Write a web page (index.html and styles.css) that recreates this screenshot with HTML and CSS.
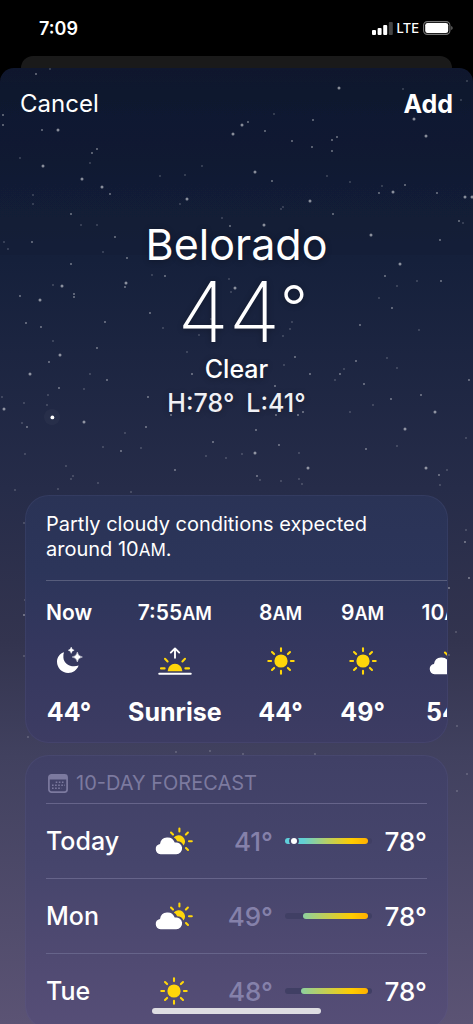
FILE: index.html
```html
<!DOCTYPE html>
<html lang="en">
<head>
<meta charset="utf-8">
<meta name="viewport" content="width=device-width, initial-scale=1">
<title>Belorado weather</title>
<link rel="stylesheet" href="styles.css">
</head>
<body>
<svg class="defs" aria-hidden="true">
  <symbol id="sun" viewBox="0 0 28 28">
    <circle cx="14" cy="14" r="6.6" fill="#ffd60a"/>
    <path d="M14 1.3v2.8M14 23.9v2.8M1.3 14h2.8M23.9 14h2.8M5 5l2.1 2.1M20.9 20.9l2.1 2.1M5 23l2.1-2.1M20.9 7.1l2.1-2.1" stroke="#ffd60a" stroke-width="2.1" stroke-linecap="round"/>
  </symbol>
  <symbol id="partly" viewBox="0 0 38 28">
    <path d="M24.4 1.6v2.8M34 14.2h2.8M16 5.6l2 2M30.9 7.6l2-2M31 21l2 2" stroke="#ffd60a" stroke-width="2.1" stroke-linecap="round"/>
    <path d="M18.8 10.5A6.3 6.3 0 1 1 28.6 18.6A7 7 0 0 0 22.2 14.3A8 8 0 0 0 18.8 10.5z" fill="#ffd60a"/>
    <path d="M5.6 27.2A5.2 5.2 0 0 1 5 16.9A7.6 7.6 0 0 1 19.7 15.6A5.9 5.9 0 1 1 21.2 27.2z" fill="#fff"/>
  </symbol>
  <symbol id="moon" viewBox="0 0 28 28">
    <path d="M9 5.2C5 6.400 2 10 2 14.800C2 21 7 26 13.200 26C18 26 22 23.200 23.600 18.600C16.500 21 9 17.500 8.400 10.800C8.200 8.700 8.400 6.800 9 5.200z" fill="#fff"/>
    <path d="M22.300 5q.7 4.300 5.200 5q-4.500.7-5.200 5q-.7-4.300-5.200-5q4.500-.7 5.200-5zM16.200 0q.4 2.700 3 3.200q-2.600.5-3 3.200q-.4-2.700-3-3.200q2.600-.5 3-3.200z" fill="#fff" stroke="#fff" stroke-width=".4"/>
  </symbol>
  <symbol id="sunrise" viewBox="0 0 34 28">
    <path d="M9.600 24.200A7.200 7.200 0 1 1 24.400 24.200z" fill="#ffd60a"/>
    <path d="M3 21.400h3.600M27.400 21.400H31M7 11.800l2.600 2.600M27 11.800l-2.600 2.600" stroke="#ffd60a" stroke-width="2.1" stroke-linecap="round"/>
    <path d="M1.200 26.800h31.600M17 10.800V1.600M12.800 5.600L17 1.400l4.200 4.200" fill="none" stroke="#fff" stroke-width="1.9" stroke-linecap="round" stroke-linejoin="round"/>
  </symbol>
</svg>

<header class="status">
  <time>7:09</time>
  <div class="signals">
    <svg width="21" height="13" viewBox="0 0 21 13" aria-label="Signal"><rect y="8" width="4" height="5" rx="1" fill="#fff"/><rect x="5.600" y="6" width="4" height="7" rx="1" fill="#fff"/><rect x="11.200" y="3" width="4" height="10" rx="1" fill="#fff"/><rect x="16.800" width="4" height="13" rx="1" fill="#444"/></svg>
    <span>LTE</span>
    <svg width="30" height="14" viewBox="0 0 30 14" aria-label="Battery"><rect x=".6" y=".6" width="26.300" height="12.800" rx="3.800" fill="none" stroke="#777" stroke-width="1.100"/><rect x="2.200" y="2" width="23" height="10" rx="2.300" fill="#fff"/><path d="M28.300 5v4q1.300-.5 1.300-2t-1.300-2z" fill="#777"/></svg>
  </div>
</header>
<div class="behind"></div>

<main class="sheet">
  <svg class="stars" width="473" height="956" viewBox="0 68 473 956" aria-hidden="true">
    <path class="faint" d="M50 69h0M403 89h0M467 81h0M461 100h0M20 158h0M274 114h0M202 166h0M160 176h0M185 175h0M180 204h0M222 218h0M281 209h0M283 207h0M327 176h0M350 182h0M382 186h0M463 223h0M33 195h0M33 204h0M4 242h0M8 249h0M103 252h0M53 285h0M53 341h0M90 374h0M84 389h0M47 405h0M22 423h0M2 397h0M24 403h0M48 395h0M25 454h0M103 447h0M125 433h0M66 466h0M73 476h0M71 479h0M98 483h0M131 492h0M15 490h0M58 489h0M141 448h0M206 456h0M226 458h0M242 454h0M260 480h0M281 481h0M299 479h0M302 484h0M299 453h0M335 380h0M344 369h0M350 412h0M373 405h0M419 330h0M379 298h0M397 286h0M417 281h0M387 358h0M397 368h0M397 446h0M466 438h0M447 470h0M440 485h0M152 275h0M229 279h0M231 292h0M292 322h0M290 329h0M283 336h0M187 352h0M211 319h0M284 365h0M199 335h0M163 328h0M466 530h0M24 523h0M25 600h0M24 656h0M456 632h0M449 655h0M457 726h0M467 774h0M457 791h0M28 737h0M176 752h0M210 751h0M333 776h0M243 754h0M315 754h0M81 225h0M97 225h0M90 163h0"/>
    <path class="mid" d="M36 74h0M3 115h0M3 125h0M42 130h0M97 149h0M92 153h0M71 214h0M115 237h0M127 258h0M71 264h0M32 242h0M26 323h0M41 327h0M105 322h0M97 348h0M49 362h0M107 380h0M59 388h0M27 427h0M121 451h0M148 397h0M146 427h0M74 294h0M74 297h0M20 296h0M110 194h0M125 287h0M248 122h0M313 120h0M265 131h0M292 141h0M312 147h0M272 181h0M333 214h0M332 151h0M337 137h0M332 140h0M379 193h0M405 185h0M437 193h0M459 221h0M440 240h0M385 276h0M441 281h0M392 308h0M360 325h0M356 361h0M340 374h0M364 384h0M391 399h0M421 395h0M469 380h0M366 449h0M439 475h0M165 276h0M150 313h0M192 374h0M295 357h0M310 374h0M275 386h0M276 415h0M303 412h0M298 415h0M256 430h0M279 445h0M257 476h0M175 470h0M213 442h0M171 415h0M465 542h0M469 578h0M449 588h0M24 615h0M230 226h0"/>
    <path class="bright" d="M339 88h0M414 119h0M242 125h0M233 134h0M43 166h0M82 179h0M102 187h0M393 192h0M255 172h0M187 199h0M371 235h0M426 136h0M465 197h0M472 197h0M400 264h0M62 286h0M126 283h0M40 300h0M60 355h0M30 374h0M4 409h0M264 225h0M310 201h0M435 412h0M405 429h0M426 468h0M255 453h0M308 468h0M235 288h0M84 422h0M58 130h0"/>
    <circle cx="52" cy="417" r="8" fill="#fff" opacity=".03"/>
    <circle cx="52.400" cy="417.400" r="1.900" fill="#fff"/>
  </svg>

  <nav class="actions">
    <button class="action" type="button">Cancel</button>
    <button class="action add" type="button">Add</button>
  </nav>

  <section class="current">
    <h1>Belorado</h1>
    <p class="now">44<span class="degree">°</span></p>
    <p class="condition">Clear</p>
    <p class="range"><span>H:78°</span><span>L:41°</span></p>
  </section>

  <section class="card">
    <p class="summary">Partly cloudy conditions expected around 10<small>AM</small>.</p>
    <ul class="hours">
      <li><span class="hour">Now</span><svg class="icon"><use href="#moon"/></svg><b>44°</b></li>
      <li><span class="hour">7:55<small>AM</small></span><svg class="icon wide"><use href="#sunrise"/></svg><b>Sunrise</b></li>
      <li><span class="hour">8<small>AM</small></span><svg class="icon"><use href="#sun"/></svg><b>44°</b></li>
      <li><span class="hour">9<small>AM</small></span><svg class="icon"><use href="#sun"/></svg><b>49°</b></li>
      <li><span class="hour">10<small>AM</small></span><svg class="icon cloud"><use href="#partly"/></svg><b>54°</b></li>
    </ul>
  </section>

  <section class="card forecast">
    <h2>
      <svg width="20" height="19" viewBox="0 0 20 19" aria-hidden="true"><rect x=".9" y=".9" width="18.200" height="17.200" rx="2.600" fill="none" stroke="currentColor" stroke-width="1.700"/><path d="M1 1h18v4.600H1z" fill="currentColor"/><path d="M7.700 8.300h9M4 11.300h13M4 14.300h9.500" stroke="currentColor" stroke-width="1.600" stroke-dasharray="1.600 1.500"/></svg>
      10-DAY FORECAST
    </h2>
    <ul class="days">
      <li><span>Today</span><svg class="icon cloud"><use href="#partly"/></svg><span class="low">41°</span><span class="track"><span class="fill cool" style="left:0%"></span><span class="dot" style="left:10%"></span></span><span class="high">78°</span></li>
      <li><span>Mon</span><svg class="icon cloud"><use href="#partly"/></svg><span class="low">49°</span><span class="track"><span class="fill" style="left:21%"></span></span><span class="high">78°</span></li>
      <li><span>Tue</span><svg class="icon"><use href="#sun"/></svg><span class="low">48°</span><span class="track"><span class="fill" style="left:18%"></span></span><span class="high">78°</span></li>
    </ul>
  </section>
</main>
<div class="home"></div>
</body>
</html>
```

FILE: styles.css
```css
* { box-sizing: border-box; }
body {
  margin: 0;
  height: 100vh;
  overflow: hidden;
  display: flex;
  flex-direction: column;
  background: #000;
  color: #fff;
  font-family: Inter, "Liberation Sans", sans-serif;
}
h1, h2, p, ul { margin: 0; padding: 0; font-weight: 400; }
ul { list-style: none; }
.defs { position: absolute; width: 0; height: 0; }

.status {
  flex: none;
  height: 56px;
  padding: 0 20px 0 39px;
  display: flex;
  align-items: center;
  justify-content: space-between;
  font-size: 18px;
  font-weight: 600;
}
.signals { display: flex; align-items: center; gap: 4px; font-size: 13px; font-weight: 500; }
.signals svg { display: block; }

.behind {
  flex: none;
  height: 12px;
  margin: 0 21px;
  background: #1a1a1a;
  border-radius: 12px 12px 0 0;
}

.sheet {
  position: relative;
  flex: 1;
  min-height: 0;
  overflow: hidden;
  padding: 0 25px;
  border-radius: 14px 14px 0 0;
  background: linear-gradient(#10182f, #15203b 20%, #262c49 44%, #33344f 60%, #41415f 72%, #5b5374);
}
.stars { position: absolute; top: 0; left: 0; }
.stars path { stroke: #fff; stroke-linecap: round; }
.faint { stroke-width: 2; opacity: .2; }
.mid { stroke-width: 2; opacity: .4; }
.bright { stroke-width: 3; opacity: .5; }

.actions, .current, .card { position: relative; }
.actions {
  height: 72px;
  margin: 0 -5px;
  display: flex;
  align-items: center;
  justify-content: space-between;
}
.action {
  padding: 0;
  border: 0;
  background: none;
  color: inherit;
  font: 400 24px/32px Inter, "Liberation Sans", sans-serif;
}
.add { font-size: 25px; font-weight: 700; }

.current {
  height: 355px;
  padding-top: 77px;
  text-align: center;
  text-shadow: 0 1px 6px rgba(0, 0, 0, .3);
}
h1 { font-size: 43px; line-height: 54px; }
.now {
  display: flex;
  justify-content: center;
  padding-left: 12px;
  font-size: 84px;
  line-height: 82px;
  font-weight: 200;
}
.degree { font-size: 60px; line-height: 72px; font-weight: 300; }
.condition { font-size: 25px; line-height: 32px; font-weight: 500; }
.range { display: flex; justify-content: center; gap: 12px; font-size: 25px; line-height: 36px; font-weight: 500; color: #f0f0f4; }

.card {
  overflow: hidden;
  padding-left: 20px;
  border-radius: 24px;
  border: 1px solid rgba(120, 120, 170, .12);
  background: linear-gradient(#2a3356, #2c355a 30%, #34375e 60%, #3d3c63) border-box;
}
.summary {
  padding: 16px 20px 18px 0;
  border-bottom: 1px solid #575d7c;
  font-size: 20px;
  line-height: 25px;
}
small { font-size: 17px; line-height: 17px; }
.hours { display: flex; gap: 36px; padding-bottom: 14px; }
.hours li { flex: none; min-width: 46px; display: flex; flex-direction: column; align-items: center; }
.hour { margin: 19px 0 21px; font-size: 21px; line-height: 26px; font-weight: 600; }
.hour small { font-size: 18px; }
.hours b { margin-top: 21px; font-size: 25px; line-height: 32px; font-weight: 700; }
.icon { display: block; width: 28px; height: 28px; }
.wide { width: 34px; }
.cloud { width: 38px; }

.forecast {
  margin-top: 12px;
  padding-right: 20px;
  background: linear-gradient(#404066, #46456c 40%, #504a72 75%, #564e77) border-box;
}
h2 {
  display: flex;
  align-items: center;
  gap: 8px;
  padding: 14px 2px 6px;
  color: #7c7a9f;
  font-size: 20px;
  line-height: 27px;
  font-weight: 400;
}
.days li {
  height: 75px;
  display: grid;
  grid-template-columns: 88px 80px 59px minmax(40px, 1fr) 55px;
  align-items: center;
  border-top: 1px solid #66648a;
  font-size: 25px;
  font-weight: 500;
}
.days .icon { justify-self: center; }
.low { color: #8581aa; }
.low, .high { font-size: 26px; text-align: right; white-space: nowrap; }
.track {
  position: relative;
  height: 6px;
  margin-left: 12px;
  border-radius: 3px;
  background: #403f64;
}
.fill {
  position: absolute;
  top: 0;
  bottom: 0;
  right: 5%;
  border-radius: 3px;
  background: linear-gradient(90deg, #8dd09f, #c9cf4c 40%, #ffcc00 75%, #ffb000);
}
.cool { background: linear-gradient(90deg, #5fd0dc, #62d0d4 22%, #b5d068 50%, #ffcc00 80%, #ffb000); }
.dot {
  position: absolute;
  top: -2px;
  width: 10px;
  height: 10px;
  margin-left: -5px;
  border: 2px solid #47466d;
  border-radius: 50%;
  background: #fff;
}
.home {
  position: fixed;
  bottom: 10px;
  left: 50%;
  width: 169px;
  height: 6px;
  margin-left: -85px;
  border-radius: 3px;
  background: #dedde2;
}
```
